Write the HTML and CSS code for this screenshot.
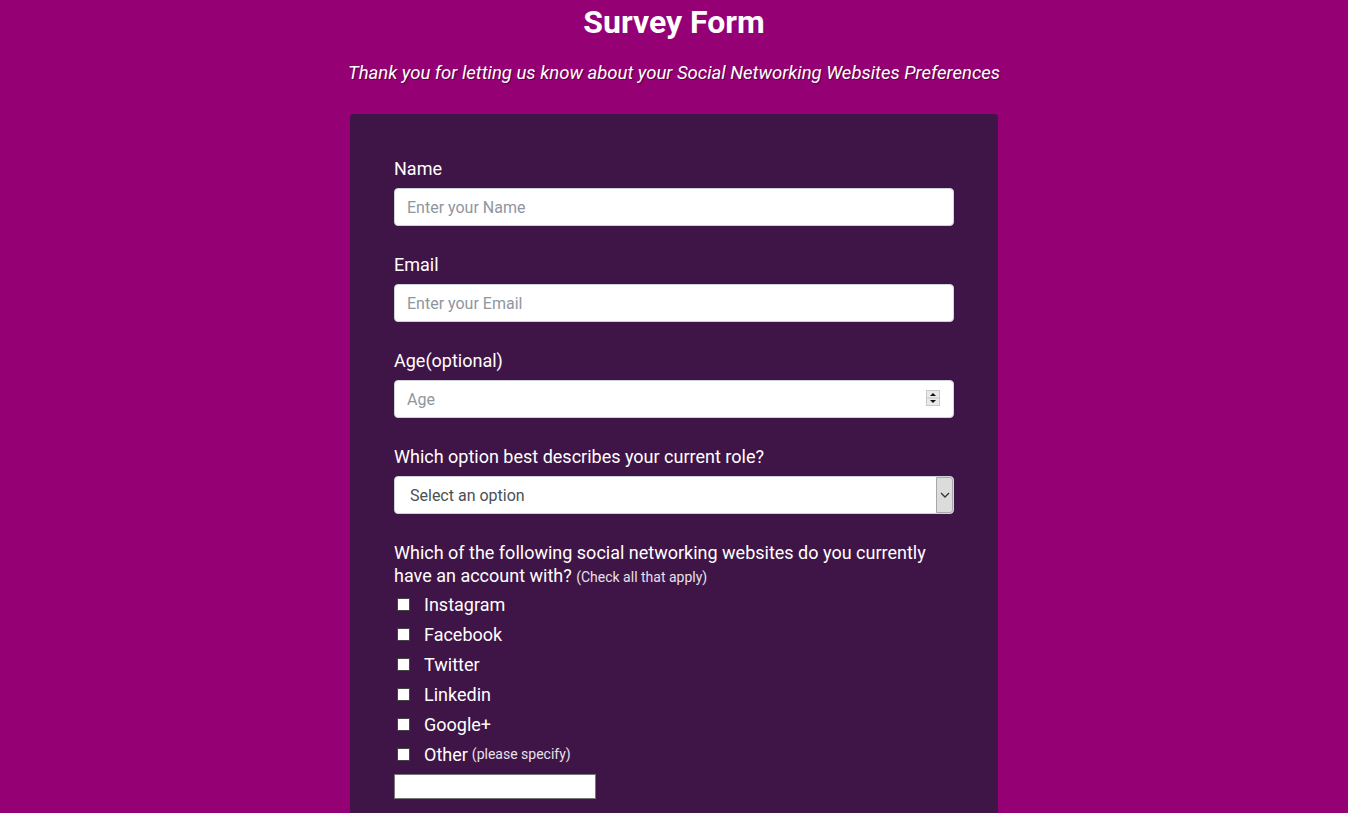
FILE: index.html
```html
<!DOCTYPE html>
<html lang="en">
<head>
<meta charset="utf-8">
<title>Survey Form</title>
<link rel="stylesheet" href="styles.css">
</head>
<body>
<header class="header">
  <h1 class="title">Survey Form</h1>
  <p class="description">Thank you for letting us know about your Social Networking Websites Preferences</p>
</header>
<form class="card">
  <div class="group">
    <label class="label" for="name">Name</label>
    <input class="control" id="name" type="text" placeholder="Enter your Name">
  </div>
  <div class="group">
    <label class="label" for="email">Email</label>
    <input class="control" id="email" type="email" placeholder="Enter your Email">
  </div>
  <div class="group">
    <label class="label" for="age">Age(optional)</label>
    <div class="field">
      <input class="control number" id="age" type="number" placeholder="Age">
      <span class="spinner">
        <svg width="14" height="16" viewBox="0 0 14 16"><rect x="0.5" y="0.5" width="13" height="15" fill="#e9e9e9" stroke="#c8c8c8"/><line x1="1" y1="8" x2="13" y2="8" stroke="#c8c8c8"/><path d="M4 6 L7 3 L10 6 Z" fill="#111"/><path d="M4 10 L7 13 L10 10 Z" fill="#111"/></svg>
      </span>
    </div>
  </div>
  <div class="group">
    <label class="label" for="role">Which option best describes your current role?</label>
    <div class="field">
      <select class="control select" id="role">
        <option>Select an option</option>
        <option>Student</option>
        <option>Full Time Job</option>
        <option>Prefer not to say</option>
        <option>Other</option>
      </select>
      <span class="arrow">
        <svg width="10" height="6" viewBox="0 0 10 6"><path d="M1 1 L5 5 L9 1" fill="none" stroke="#333" stroke-width="1.3"/></svg>
      </span>
    </div>
  </div>
  <div class="group">
    <p class="label question">Which of the following social networking websites do you currently have an account with? <span class="hint">(Check all that apply)</span></p>
    <label class="check"><input type="checkbox" class="box"> Instagram</label>
    <label class="check"><input type="checkbox" class="box"> Facebook</label>
    <label class="check"><input type="checkbox" class="box"> Twitter</label>
    <label class="check"><input type="checkbox" class="box"> Linkedin</label>
    <label class="check"><input type="checkbox" class="box"> Google+</label>
    <label class="check"><input type="checkbox" class="box"> Other <span class="hint">(please specify)</span></label>
    <input class="other" type="text">
  </div>
</form>
</body>
</html>
```
FILE: styles.css
```css
* { box-sizing: border-box; }
html, body { margin: 0; padding: 0; }
body {
  background: #950075;
  font-family: Roboto, "Liberation Sans", sans-serif;
  color: #fff;
}
.header { text-align: center; }
.title {
  margin: 0;
  font-size: 32px;
  font-weight: 700;
  line-height: 44px;
}
.description {
  margin: 18px 0 0;
  font-size: 18.5px;
  font-style: italic;
  line-height: 22px;
  text-shadow: 1px 1px 1px rgba(0,0,0,0.45);
}
.card {
  width: 648px;
  margin: 30px auto 0;
  background: #3f1447;
  border-radius: 4px;
  padding: 43px 44px 60px;
}
.group { margin-bottom: 27px; }
.label {
  display: block;
  font-size: 18px;
  line-height: 24px;
  margin: 0 0 7px;
}
.question { margin: 0 0 2px; line-height: 23px; }
.hint { font-size: 14px; line-height: 18px; color: #e8e0ea; }
.field { position: relative; }
.control {
  display: block;
  width: 100%;
  height: 38px;
  border: 1px solid #ced4da;
  border-radius: 4px;
  background: #fff;
  padding: 0 12px;
  font-family: Roboto, "Liberation Sans", sans-serif;
  font-size: 16px;
  color: #495057;
  outline: none;
}
.control::placeholder { color: #8f96a0; }
.number { -moz-appearance: textfield; }
.number::-webkit-inner-spin-button,
.number::-webkit-outer-spin-button { -webkit-appearance: none; margin: 0; }
.spinner {
  position: absolute;
  right: 14px;
  top: 10px;
  line-height: 0;
}
.select {
  -webkit-appearance: none;
  appearance: none;
  padding-left: 15px;
  color: #495057;
}
.arrow {
  position: absolute;
  right: 1px;
  top: 1px;
  width: 17px;
  height: 36px;
  background: #dcdcdc;
  border: 1px solid #a9a9a9;
  border-radius: 0 3px 3px 0;
  display: flex;
  align-items: center;
  justify-content: center;
}
.check {
  display: flex;
  align-items: center;
  height: 30px;
  font-size: 18px;
}
.check .hint { margin-left: 4px; }
.box {
  -webkit-appearance: none;
  appearance: none;
  width: 13px;
  height: 13px;
  margin: 0 14px 0 3px;
  background: #fff;
  border: 1px solid #444;
  border-radius: 0;
}
.other {
  display: block;
  margin-top: 5px;
  width: 202px;
  height: 25px;
  border: 1px solid #767676;
  background: #fff;
  font-size: 14px;
  padding: 0 4px;
}
```
